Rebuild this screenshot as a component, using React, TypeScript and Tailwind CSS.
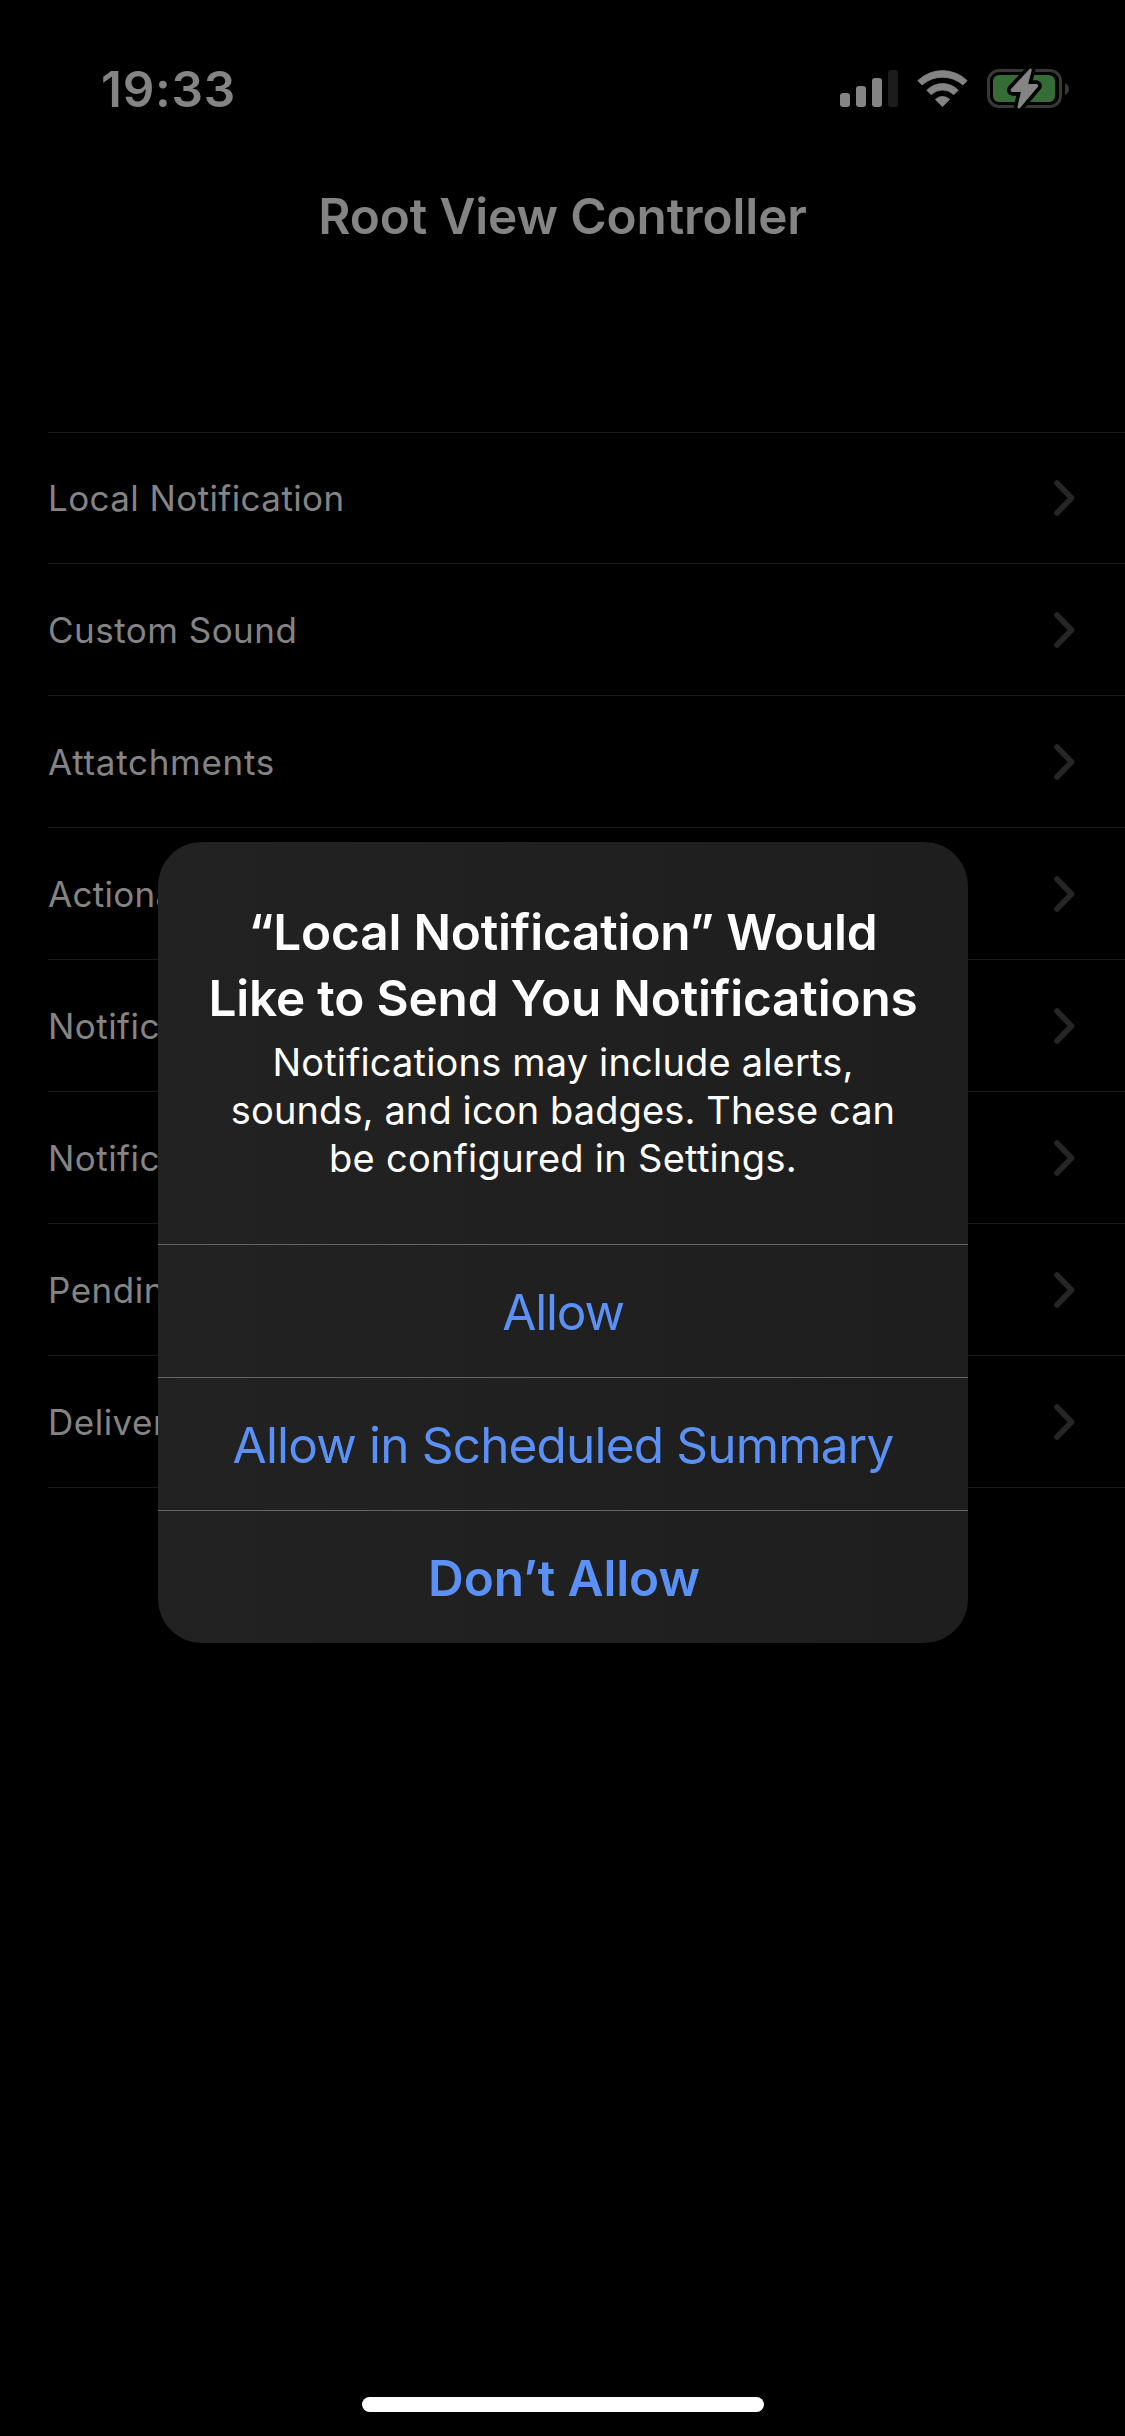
import React from "react";

type Row = { label: string; tracking: string };

const rows: Row[] = [
  { label: "Local Notification", tracking: "tracking-[0.4px]" },
  { label: "Custom Sound", tracking: "tracking-[0.48px]" },
  { label: "Attatchments", tracking: "tracking-[0.7px]" },
  { label: "Actionable", tracking: "tracking-[0.3px]" },
  { label: "Notification", tracking: "tracking-[0.45px]" },
  { label: "Notification", tracking: "tracking-[0.45px]" },
  { label: "Pending", tracking: "tracking-[0.5px]" },
  { label: "Delivered", tracking: "tracking-[0.5px]" },
];

const boltPath =
  "M1030 69.4L1011.4 89.4Q1010.6 91 1012.4 91.4H1021.6L1018 107.2Q1018.4 108.6 1019.6 107.6L1037.4 86.4Q1038 85 1036.6 84.6H1027.4L1031.2 69.8Q1030.8 68.8 1030 69.4Z";

function StatusIcons() {
  return (
    <svg className="h-[46px] w-[232px]" viewBox="839 66 232 46" fill="none">
      <g fill="#848484">
        <rect x="840" y="93" width="10" height="14" rx="3" />
        <rect x="856" y="86" width="10" height="21" rx="3" />
        <rect x="872" y="78" width="10" height="29" rx="3" />
      </g>
      <rect x="888" y="70" width="10" height="37" rx="3" fill="#1c1c1c" />
      <g fill="#848484" stroke="#848484" strokeWidth="0.8" strokeLinejoin="round">
        <path d="M917.8 80.6A35.5 35.5 0 0 1 967.2 80.6L962.9 85A30.6 30.6 0 0 0 922.1 85Z" />
        <path d="M926.8 90.2A21.8 21.8 0 0 1 958.2 90.2L953.8 94.7A16 16 0 0 0 931.2 94.7Z" />
        <path d="M935.4 99.4A10 10 0 0 1 949.6 99.4L942.5 106.6Z" />
      </g>
      <rect x="988.5" y="70.5" width="72" height="36" rx="10.5" stroke="#373737" strokeWidth="3" />
      <path d="M1065 83Q1069 85 1069 89T1065 95Z" fill="#373737" />
      <rect x="993" y="75" width="62" height="27" rx="6" fill="#366d36" />
      <path d={boltPath} fill="#000" stroke="#000" strokeWidth="8.5" strokeLinejoin="round" />
      <path d={boltPath} fill="#848484" stroke="#848484" strokeWidth="1.2" strokeLinejoin="round" />
    </svg>
  );
}

function Chevron() {
  return (
    <svg className="h-9 w-[21px]" viewBox="0 0 21 36" fill="none">
      <path d="M3 3L17.5 18L3 33" stroke="#262628" strokeWidth="5.6" strokeLinecap="round" strokeLinejoin="round" />
    </svg>
  );
}

export default function App() {
  return (
    <div className="relative flex h-[2436px] w-[1125px] flex-col overflow-hidden bg-black font-['Inter',sans-serif] text-[#848484]">
      <header className="flex h-[134px] items-center justify-between pt-11 pr-[54px] pl-[101px]">
        <span className="text-[49.5px] leading-[66px] font-semibold tracking-[0.7px]">19:33</span>
        <StatusIcons />
      </header>

      <h1 className="flex h-[164px] items-center justify-center text-[49.5px] leading-[66px] font-semibold tracking-[-0.13px] whitespace-nowrap">
        Root View Controller
      </h1>

      <ul className="mt-[134px] ml-12 border-b border-[#1b1b1c]">
        {rows.map((row, i) => (
          <li
            key={i}
            className="flex h-[132px] items-center justify-between border-t border-[#1b1b1c] pr-[50px] first:h-[131px]"
          >
            <span className={`text-[35px] leading-[44px] whitespace-nowrap ${row.tracking}`}>{row.label}</span>
            <Chevron />
          </li>
        ))}
      </ul>

      <div className="absolute top-[842px] left-[158px] flex h-[801px] w-[810px] flex-col overflow-hidden rounded-[44px] bg-linear-to-r from-[#222222] to-[#1e1e1e] text-center whitespace-nowrap">
        <div className="flex h-[402px] flex-col pt-[57px] text-white">
          <h2 className="text-[49.5px] leading-[66px] font-semibold">
            <span className="block tracking-[-0.19px]">“Local Notification” Would</span>
            <span className="block tracking-[-0.17px]">Like to Send You Notifications</span>
          </h2>
          <p className="mt-[7px] text-[38px] leading-[48px]">
            <span className="block tracking-[0.18px]">Notifications may include alerts,</span>
            <span className="block tracking-[0.11px]">sounds, and icon badges. These can</span>
            <span className="block tracking-[0.28px]">be configured in Settings.</span>
          </p>
        </div>
        <button className="h-[133px] border-t border-[#646464] pt-[2px] text-[49.5px] leading-[66px] tracking-[-1.15px] text-[#5b91f7]">
          Allow
        </button>
        <button className="h-[133px] border-t border-[#646464] pt-[2px] text-[49.5px] leading-[66px] tracking-[-0.82px] text-[#5b91f7]">
          Allow in Scheduled Summary
        </button>
        <button className="h-[133px] border-t border-[#646464] pt-[2px] pl-[2px] text-[49.5px] leading-[66px] font-semibold tracking-[-0.1px] text-[#5b91f7]">
          Don’t Allow
        </button>
      </div>

      <div className="mt-auto mb-6 ml-[362px] h-[15px] w-[402px] rounded-full bg-white" />
    </div>
  );
}
